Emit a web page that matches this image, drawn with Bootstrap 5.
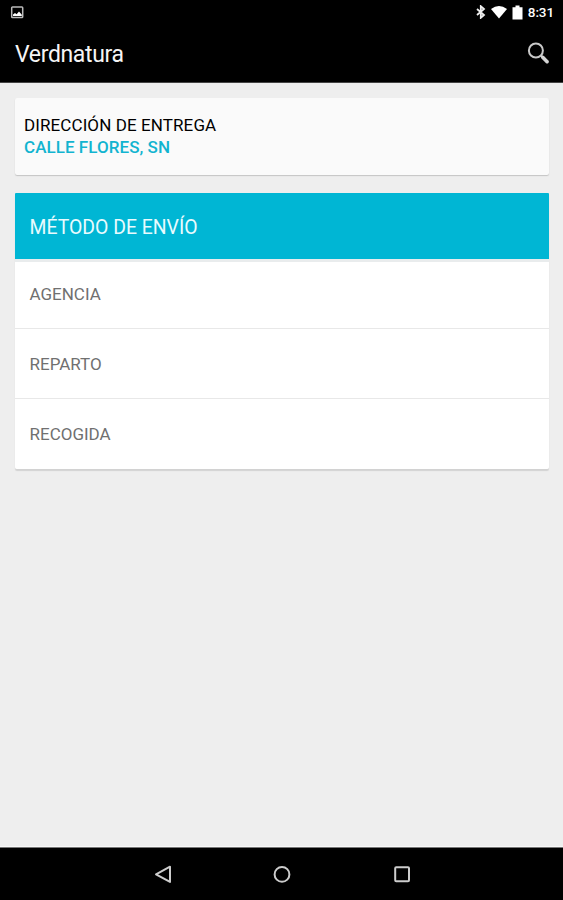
<!DOCTYPE html>
<html lang="es">
<head>
<meta charset="utf-8">
<meta name="viewport" content="width=device-width, initial-scale=1">
<title>Verdnatura</title>
<link href="https://cdn.jsdelivr.net/npm/bootstrap@5.3.0/dist/css/bootstrap.min.css" rel="stylesheet">
<style>
  body { font-family: Roboto, sans-serif; background: #eee; color: #000; }
  svg { display: block; flex: none; }
  .status-bar { height: 24px; padding: 0 9px 0 10px; }
  .clock { font-size: 13.5px; font-weight: 500; line-height: 24px; letter-spacing: -.1px; margin-left: 4px; }
  .app-bar { height: 59px; padding: 0 13px 0 15px; border-bottom: 1px solid #444; }
  .app-title { font-size: 23px; line-height: 28px; letter-spacing: -.35px; color: #f5f5f5; padding-top: 3px; }
  .content { padding: 15px 14.5px 0 15px; }
  .address { height: 77px; padding: 16px 9px; background: #fafafa; border-radius: 2px; box-shadow: 0 1px 1px #c4c4c4; font-size: 17px; line-height: 22px; }
  .address-label { letter-spacing: .1px; }
  .address-value { color: #12b4d0; font-weight: 500; letter-spacing: .05px; }
  .methods { margin-top: 18px; border-radius: 2px; box-shadow: 0 2px 1px #d2d2d2; }
  .methods .list-group-item { padding: 2px 14.5px 0; height: 70px; border: 0; border-top: 1px solid #e8e8e8; color: #707070; font-size: 17px; }
  .methods .list-group-item:last-child { height: 71px; }
  .methods .list-group-item.heading { height: 66px; border: 0; background: #00b6d4; color: #e9fbfe; font-size: 19.4px; border-radius: 1px 1px 0 0; }
  .methods .list-group-item.first { height: 69px; padding-top: 0; border-top: 3px solid #e9eced; }
  .nav-bar { height: 53px; border-top: 1px solid #777; box-shadow: 0 -1px #f8f8f8; }
  .nav-bar .btn { width: 120px; padding: 0; border: 0; }
</style>
</head>
<body class="vh-100 d-flex flex-column overflow-hidden">
  <header class="bg-black text-white">
    <div class="status-bar d-flex align-items-center">
      <svg width="14" height="13" viewBox="0 0 14 13"><rect x="1.7" y="1" width="11" height="10.5" rx=".8" fill="none" stroke="#bbb" stroke-width="1.5"/><path d="M3 10V8.5L5 7l1.6 1.2L9 5.5l2.8 3.3V10z" fill="#fff"/></svg>
      <div class="ms-auto d-flex align-items-center">
        <svg width="10" height="14" viewBox="0 0 10 14"><path d="M1 4l7 6-3.2 2.8V1.2L8 4l-7 6" fill="none" stroke="#eee" stroke-width="1.8"/></svg>
        <svg class="ms-1" width="18" height="14" viewBox="0 0 18 14"><path d="M1 4Q9-2.2 17 4L9 13.4z" fill="#fff"/></svg>
        <svg class="ms-1" width="12" height="15" viewBox="0 0 12 15"><path d="M.5 2.2h3V.6h4v1.6h3v12.2H.5z" fill="#fff"/></svg>
        <span class="clock">8:31</span>
      </div>
    </div>
    <div class="app-bar d-flex align-items-center justify-content-between">
      <h1 class="app-title fw-normal m-0">Verdnatura</h1>
      <svg width="24" height="24" viewBox="0 0 24 24" role="img" aria-label="Buscar"><circle cx="9.9" cy="9.5" r="7" fill="none" stroke="#c8c8c8" stroke-width="2"/><path d="M14.7 14.3l2 2" stroke="#c8c8c8" stroke-width="2"/><path d="M16.7 16.3l4.4 4.4" stroke="#d4d4d4" stroke-width="3.6" stroke-linecap="round"/></svg>
    </div>
  </header>
  <main class="content flex-grow-1">
    <section class="address">
      <div class="address-label">DIRECCIÓN DE ENTREGA</div>
      <div class="address-value">CALLE FLORES, SN</div>
    </section>
    <div class="methods list-group">
      <div class="list-group-item heading d-flex align-items-center pt-1">MÉTODO DE ENVÍO</div>
      <a class="list-group-item first d-flex align-items-center" href="#">AGENCIA</a>
      <a class="list-group-item d-flex align-items-center" href="#">REPARTO</a>
      <a class="list-group-item d-flex align-items-center" href="#">RECOGIDA</a>
    </div>
  </main>
  <nav class="nav-bar bg-black d-flex justify-content-center align-items-center">
    <button class="btn d-flex justify-content-center" aria-label="Atrás"><svg width="20" height="20" viewBox="0 0 20 20"><path d="M18 2.7v15.2L4 10.3z" fill="none" stroke="#ccc" stroke-width="2" stroke-linejoin="round"/></svg></button>
    <button class="btn d-flex justify-content-center" aria-label="Inicio"><svg width="20" height="20" viewBox="0 0 20 20"><circle cx="10" cy="10.4" r="7.4" fill="none" stroke="#ccc" stroke-width="2"/></svg></button>
    <button class="btn d-flex justify-content-center" aria-label="Recientes"><svg width="20" height="20" viewBox="0 0 20 20"><rect x="3.2" y="3.3" width="13.8" height="14" rx="1" fill="none" stroke="#ccc" stroke-width="2"/></svg></button>
  </nav>
<script src="https://cdn.jsdelivr.net/npm/bootstrap@5.3.0/dist/js/bootstrap.bundle.min.js"></script>
</body>
</html>
